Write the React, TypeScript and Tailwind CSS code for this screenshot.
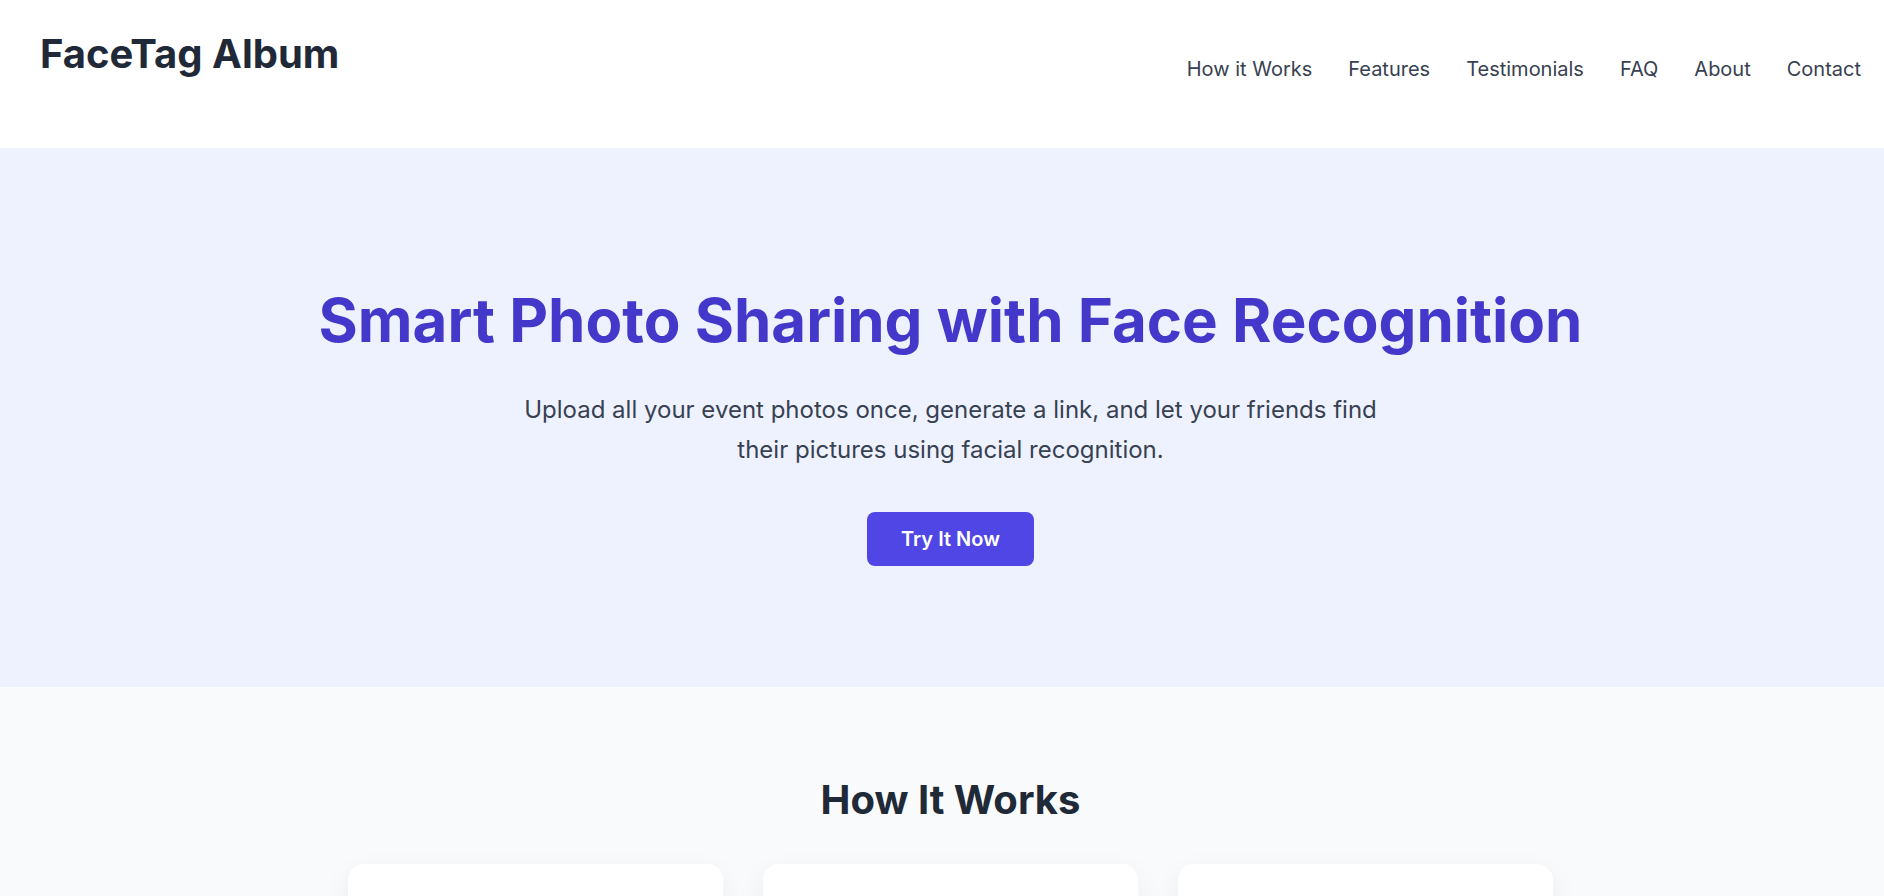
import React from "react";

const steps = [
  { n: "1", title: "Upload Photos", text: "Upload all the photos from your event in one go. We handle the rest." },
  { n: "2", title: "Share the Link", text: "Generate a unique album link and send it to everyone who attended." },
  { n: "3", title: "Find Your Photos", text: "Friends take a selfie and instantly see every photo they appear in." },
];

export default function App() {
  return (
    <div className="w-full overflow-hidden" style={{ fontFamily: "Inter, 'Noto Sans', sans-serif" }}>
      <div className="w-[1901px]">
        <header className="h-[148px] bg-white px-10 flex items-start justify-between">
          <div className="mt-[30px] text-[40px] leading-[48px] font-bold text-[#1f2937]">FaceTag Album</div>
          <nav className="mt-[55px] flex gap-9 text-[20px] leading-[28px] text-[#374151]">
            <a>How it Works</a>
            <a>Features</a>
            <a>Testimonials</a>
            <a>FAQ</a>
            <a>About</a>
            <a>Contact</a>
          </nav>
        </header>

        <section className="bg-[#eef2ff] pt-[136px] pb-[121px] flex flex-col items-center text-center">
          <h1 className="text-[60px] leading-[72px] font-bold text-[#4338ca]">Smart Photo Sharing with Face Recognition</h1>
          <p className="mt-[34px] max-w-[880px] text-[24px] leading-[40px] text-[#374151]">
            Upload all your event photos once, generate a link, and let your friends find their pictures using facial recognition.
          </p>
          <button className="mt-[42px] h-[54px] w-[167px] rounded-lg bg-[#4f46e5] text-white text-[20px] font-semibold">Try It Now</button>
        </section>

        <section className="bg-[#f9fafb] pt-[89px] pb-24">
          <h2 className="text-center text-[40px] leading-[48px] font-bold text-[#1f2937]">How It Works</h2>
          <div className="mt-10 mx-auto w-[1205px] grid grid-cols-3 gap-10">
            {steps.map((s) => (
              <div key={s.n} className="bg-white rounded-2xl shadow-[0_10px_30px_rgba(17,24,39,0.06)] p-8 h-[300px]">
                <div className="w-14 h-14 rounded-full bg-[#e0e7ff] text-[#4338ca] flex items-center justify-center text-2xl font-bold">{s.n}</div>
                <h3 className="mt-5 text-2xl font-semibold text-[#1f2937]">{s.title}</h3>
                <p className="mt-3 text-lg text-[#4b5563]">{s.text}</p>
              </div>
            ))}
          </div>
        </section>
      </div>
    </div>
  );
}
